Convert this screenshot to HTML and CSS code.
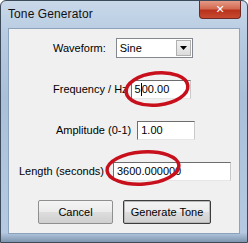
FILE: index.html
```html
<!DOCTYPE html>
<html>
<head>
<meta charset="utf-8">
<link rel="stylesheet" href="styles.css">
</head>
<body>
<div class="window">
  <div class="titlebar">
    <span class="title">Tone Generator</span>
    <div class="close"><span>✕</span></div>
  </div>
  <div class="client">
    <div class="row row-wave">
      <label class="lbl">Waveform:</label>
      <div class="combo"><span class="combo-text">Sine</span><span class="combo-btn"><svg width="7" height="4" viewBox="0 0 7 4"><path d="M0 0H7L3.5 4Z" fill="#000"/></svg></span></div>
    </div>
    <div class="row row-freq">
      <label class="lbl">Frequency / Hz</label>
      <div class="field w-freq"><span class="caret-text">5</span><span class="caret"></span><span>00.00</span></div>
    </div>
    <div class="row row-amp">
      <label class="lbl">Amplitude (0-1)</label>
      <div class="field w-amp">1.00</div>
    </div>
    <div class="row row-len">
      <label class="lbl">Length (seconds)</label>
      <div class="field w-len">3600.000000</div>
    </div>
    <div class="buttons">
      <button class="btn btn-cancel">Cancel</button>
      <button class="btn btn-default">Generate Tone</button>
    </div>
  </div>
  <svg class="marks" width="248" height="243" viewBox="0 0 248 243">
    <ellipse cx="157" cy="89" rx="31" ry="16" transform="rotate(-6 157 89)" fill="none" stroke="#c8101c" stroke-width="3.5"/>
    <ellipse cx="143" cy="168" rx="36" ry="16" transform="rotate(-4 143 168)" fill="none" stroke="#c8101c" stroke-width="3.5"/>
  </svg>
</div>
</body>
</html>
```

FILE: styles.css
```css
html, body {
  margin: 0;
  padding: 0;
  background: #ffffff;
}
.window {
  position: relative;
  width: 248px;
  height: 243px;
  box-sizing: border-box;
  border: 1px solid #3c4a5a;
  border-radius: 6px 6px 0 0;
  background: linear-gradient(180deg, #c9d9ea 0%, #b7cbe1 14%, #aac0da 40%, #b5cae2 96%, #7f95ad 100%);
  font-family: "Liberation Sans", Arial, sans-serif;
  font-size: 11px;
  color: #000;
  display: flex;
  flex-direction: column;
  overflow: hidden;
}
.titlebar {
  height: 27px;
  display: flex;
  align-items: flex-start;
  justify-content: space-between;
  padding-left: 7px;
  padding-right: 6px;
  flex-shrink: 0;
}
.title {
  font-size: 12px;
  margin-top: 6px;
  color: #111;
  letter-spacing: 0.1px;
}
.close {
  width: 42px;
  height: 18px;
  box-sizing: border-box;
  border: 1px solid #6e2a24;
  border-top: none;
  border-radius: 0 0 4px 4px;
  background: linear-gradient(180deg, #e49a86 0%, #d36a52 45%, #b8321c 55%, #c84a30 100%);
  display: flex;
  align-items: center;
  justify-content: center;
  color: #fff;
  font-size: 11px;
  font-weight: bold;
  font-family: "DejaVu Sans", sans-serif;
}
.client {
  flex: 1;
  margin: 0 7px 8px 7px;
  background: #f0f0f0;
  border: 1px solid #8da2bb;
  display: flex;
  flex-direction: column;
  padding-top: 9px;
  gap: 21px;
}
.row {
  height: 20px;
  display: flex;
  align-items: center;
}
.row-wave { padding-left: 44px; gap: 10px; }
.row-freq { padding-left: 44px; gap: 3px; }
.row-amp { padding-left: 47px; gap: 6px; }
.row-len { padding-left: 10px; gap: 9px; }
.lbl {
  white-space: nowrap;
}
.combo {
  width: 77px;
  height: 20px;
  box-sizing: border-box;
  background: #fff;
  border: 1px solid #828790;
  display: flex;
  align-items: center;
  justify-content: space-between;
  padding-left: 3px;
  padding-right: 1px;
}
.combo-btn {
  width: 15px;
  height: 16px;
  box-sizing: border-box;
  background: linear-gradient(180deg, #f2f2f2, #dcdcdc);
  border: 1px solid #b0b0b0;
  display: flex;
  align-items: center;
  justify-content: center;
}
.field {
  height: 19px;
  box-sizing: border-box;
  background: #fff;
  border-top: 1px solid #6d6d6d;
  border-left: 1px solid #6d6d6d;
  border-right: 1px solid #c9c9c9;
  border-bottom: 1px solid #e6e6e6;
  display: flex;
  align-items: center;
  padding-left: 3px;
  white-space: nowrap;
}
.w-freq { width: 60px; }
.w-amp { width: 58px; }
.w-len { width: 118px; }
.caret {
  width: 1px;
  height: 13px;
  background: #000;
}
.buttons {
  display: flex;
  gap: 10px;
  padding-left: 29px;
  margin-top: -2px;
}
.btn {
  height: 24px;
  box-sizing: border-box;
  font-family: "Liberation Sans", Arial, sans-serif;
  font-size: 11px;
  color: #000;
  background: linear-gradient(180deg, #f4f4f4 0%, #ebebeb 50%, #dddddd 51%, #cfcfcf 100%);
  border: 1px solid #8e8f8f;
  border-radius: 2px;
  padding: 0;
}
.btn-cancel { width: 75px; }
.btn-default {
  width: 88px;
  border: 1px solid #3c3c3c;
  box-shadow: inset 0 0 0 1px #b8b8b8;
}
.marks {
  position: absolute;
  left: -1px;
  top: -1px;
  pointer-events: none;
}
```
